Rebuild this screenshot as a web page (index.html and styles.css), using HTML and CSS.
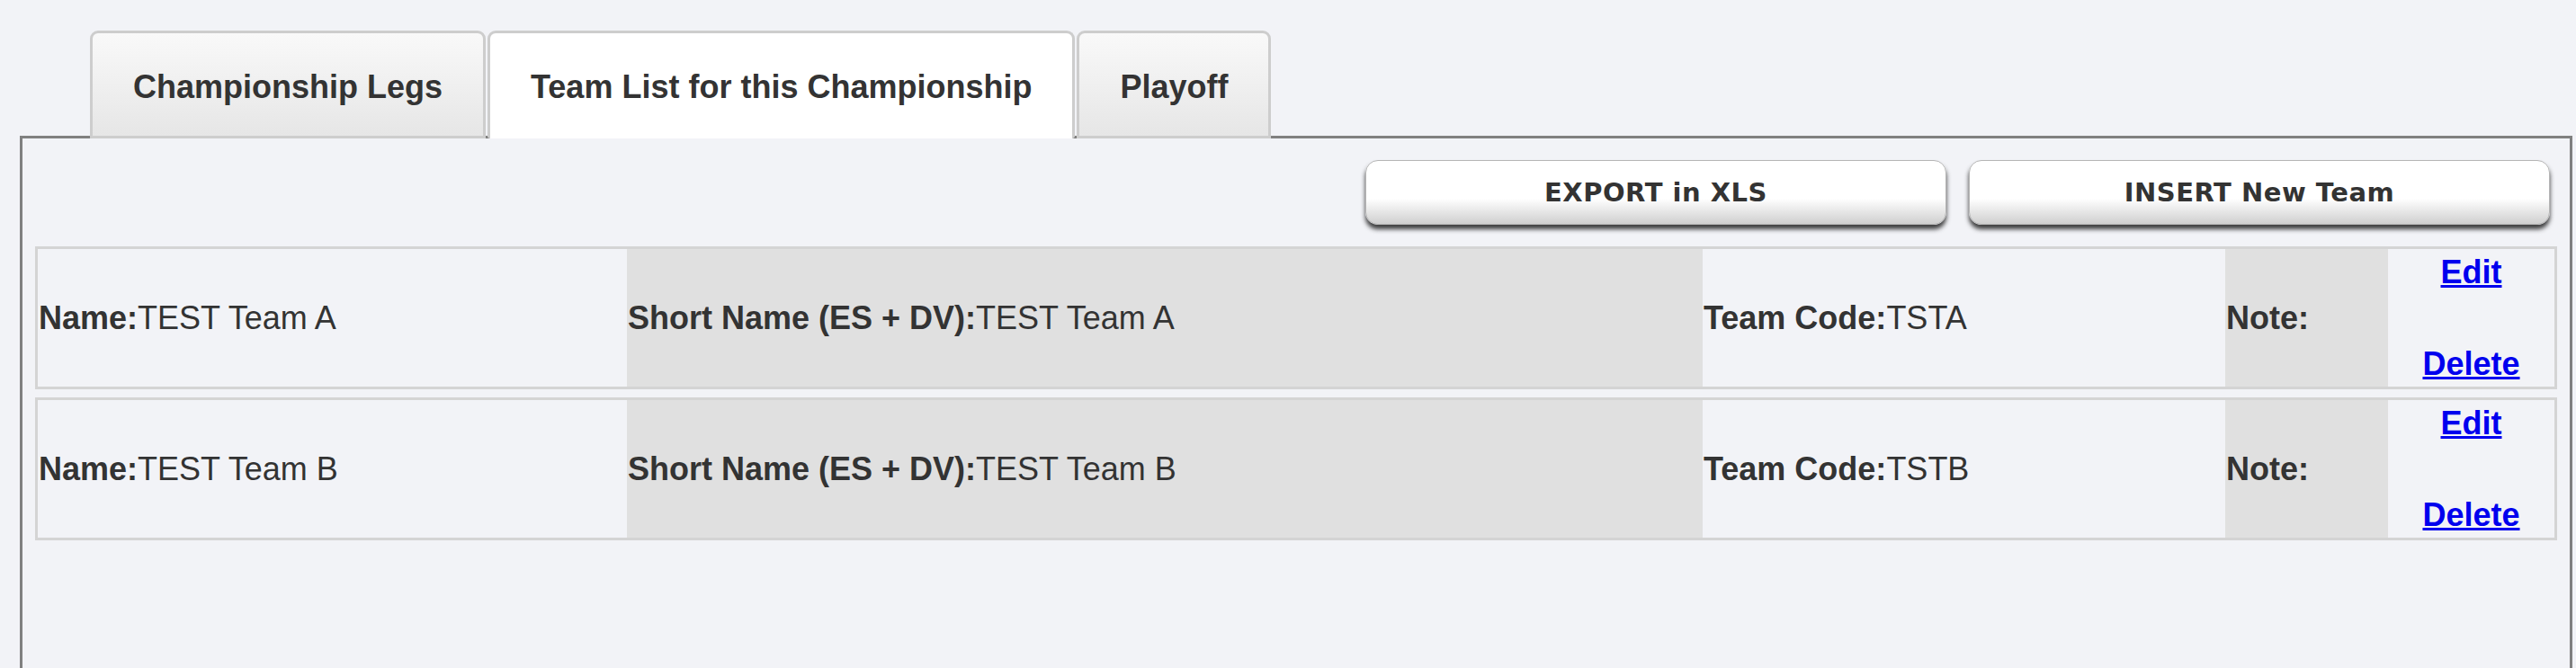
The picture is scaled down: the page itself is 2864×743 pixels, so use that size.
FILE: index.html
```html
<!DOCTYPE html>
<html lang="en">
<head>
<meta charset="utf-8">
<title>Team List for this Championship</title>
<link rel="stylesheet" href="styles.css">
</head>
<body>
<div class="page">
  <ul class="tabs">
    <li class="tab">Championship Legs</li>
    <li class="tab active">Team List for this Championship</li>
    <li class="tab">Playoff</li>
  </ul>
  <div class="panel">
    <div class="toolbar">
      <button class="btn">EXPORT in XLS</button>
      <button class="btn">INSERT New Team</button>
    </div>
    <div class="team-row">
      <div class="cell"><b>Name:</b>TEST Team A</div>
      <div class="cell shade"><b>Short Name (ES + DV):</b>TEST Team A</div>
      <div class="cell"><b>Team Code:</b>TSTA</div>
      <div class="cell shade"><b>Note:</b></div>
      <div class="cell actions"><a href="#">Edit</a><a href="#">Delete</a></div>
    </div>
    <div class="team-row">
      <div class="cell"><b>Name:</b>TEST Team B</div>
      <div class="cell shade"><b>Short Name (ES + DV):</b>TEST Team B</div>
      <div class="cell"><b>Team Code:</b>TSTB</div>
      <div class="cell shade"><b>Note:</b></div>
      <div class="cell actions"><a href="#">Edit</a><a href="#">Delete</a></div>
    </div>
  </div>
</div>
</body>
</html>
```
FILE: styles.css
```css
html, body {
  margin: 0;
  padding: 0;
  background: #f2f3f7;
  color: #333;
  font-family: "Liberation Sans", Arial, sans-serif;
  overflow: hidden;
}

.page {
  padding-top: 34px;
}

.tabs {
  list-style: none;
  margin: 0 0 -3px 100px;
  padding: 0;
  display: flex;
  gap: 2px;
  position: relative;
  z-index: 1;
}

.tab {
  box-sizing: border-box;
  height: 120px;
  padding: 39px 45px 0;
  line-height: 42px;
  font-size: 36px;
  font-weight: bold;
  color: #333;
  border: 3px solid #cdcdcd;
  border-radius: 9px 9px 0 0;
  background: linear-gradient(to bottom, #f9f9f9, #e6e6e6);
}

.tab.active {
  background: #fff;
  border-bottom-width: 0;
  border-radius: 9px 9px 3px 3px;
}

.panel {
  margin: 0 4px 0 22px;
  border: 3px solid #808080;
  min-height: 700px;
  padding: 24px 14px;
}

.toolbar {
  display: flex;
  justify-content: flex-end;
  gap: 25px;
  padding-right: 8px;
  margin-bottom: 24px;
}

.btn {
  width: 646px;
  height: 72px;
  border: 1px solid #b5b5b5;
  border-radius: 14px;
  background: linear-gradient(to bottom, #ffffff 0%, #ffffff 60%, #cfcfcf 100%);
  box-shadow: 0 5px 5px rgba(30, 30, 30, 0.85);
  font-family: "DejaVu Sans", Verdana, sans-serif;
  font-weight: bold;
  font-size: 29px;
  letter-spacing: 0.5px;
  color: #333;
  padding: 0;
}

.team-row {
  display: grid;
  grid-template-columns: 655px 1196px 581px 181px 1fr;
  border: 3px solid #d4d4d4;
  margin-bottom: 9px;
  font-size: 36px;
}

.cell {
  display: flex;
  align-items: center;
  padding: 0 1px;
  white-space: nowrap;
}

.shade {
  background: #e0e0e0;
}

.actions {
  flex-direction: column;
  justify-content: space-between;
  align-items: center;
  height: 153px;
  line-height: 51px;
}

.actions a {
  color: #0000ee;
  font-weight: bold;
  text-decoration: underline;
}
```
